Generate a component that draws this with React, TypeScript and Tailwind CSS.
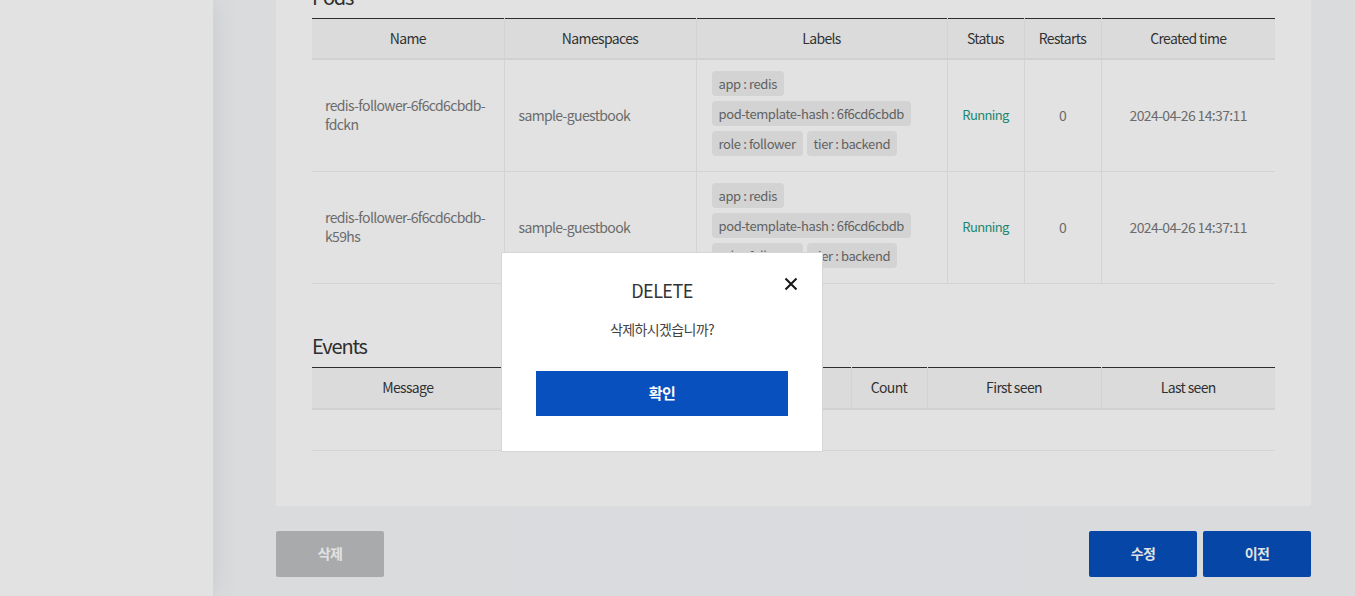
const FONT = { fontFamily: '"Noto Sans CJK KR", "Noto Sans", sans-serif' };

type Pod = {
  name: string;
  namespace: string;
  labels: string[];
  status: string;
  restarts: number;
  created: string;
};

const PODS: Pod[] = [
  {
    name: 'redis-follower-6f6cd6cbdb-fdckn',
    namespace: 'sample-guestbook',
    labels: ['app : redis', 'pod-template-hash : 6f6cd6cbdb', 'role : follower', 'tier : backend'],
    status: 'Running',
    restarts: 0,
    created: '2024-04-26 14:37:11',
  },
  {
    name: 'redis-follower-6f6cd6cbdb-k59hs',
    namespace: 'sample-guestbook',
    labels: ['app : redis', 'pod-template-hash : 6f6cd6cbdb', 'role : follower', 'tier : backend'],
    status: 'Running',
    restarts: 0,
    created: '2024-04-26 14:37:11',
  },
];

const POD_COLS = [
  { title: 'Name', w: 'w-[192px]' },
  { title: 'Namespaces', w: 'w-[192px]' },
  { title: 'Labels', w: 'w-[251px]' },
  { title: 'Status', w: 'w-[77px]' },
  { title: 'Restarts', w: 'w-[77px]' },
  { title: 'Created time', w: 'w-[174px]' },
];

const EVENT_COLS = [
  { title: 'Message', w: 'w-[192px]' },
  { title: 'Reason', w: 'w-[173px]' },
  { title: 'Source', w: 'w-[174px]' },
  { title: 'Count', w: 'w-[76px]' },
  { title: 'First seen', w: 'w-[174px]' },
  { title: 'Last seen', w: 'w-[174px]' },
];

function SectionTitle({ children }: { children: string }) {
  return (
    <h2 className="mb-[7px] h-[28px] text-[20px] leading-[28px] tracking-[-0.06em] text-[#333]">{children}</h2>
  );
}

function HeadRow({ cols, h }: { cols: { title: string; w: string }[]; h: string }) {
  return (
    <thead>
      <tr className="border-t border-[#333] border-b-2 border-b-[#ececec] bg-[#f8f8f8]">
        {cols.map((c, i) => (
          <th
            key={c.title}
            className={`${c.w} ${h} p-0 text-center text-[14px] font-normal text-[#383838] ${
              i > 0 ? 'border-l border-[#eeeeee]' : ''
            }`}
          >
            {c.title}
          </th>
        ))}
      </tr>
    </thead>
  );
}

export default function App() {
  return (
    <div className="relative flex h-[596px] w-[1355px] overflow-hidden tracking-[-0.04em]" style={FONT}>
      <aside className="z-10 w-[213px] shrink-0 bg-white shadow-[0_0_28px_rgba(0,0,0,0.08)]" />

      <main className="flex-1 bg-[#f6f7fa] pl-[63px] pr-[44px]">
        <div className="mt-[-47px] bg-white px-9 pt-[30px] pb-[55px]">
          <section>
            <SectionTitle>Pods</SectionTitle>
            <table className="w-full table-fixed border-collapse">
              <HeadRow cols={POD_COLS} h="h-[40px]" />
              <tbody>
                {PODS.map((pod) => (
                  <tr key={pod.name} className="border-b border-[#f0f0f0] text-[14px] text-[#7a7a7a]">
                    <td className="pl-[13px] pr-[6px] align-middle leading-[19px] break-words">{pod.name}</td>
                    <td className="border-l border-[#eeeeee] px-[14px] align-middle">{pod.namespace}</td>
                    <td className="border-l border-[#eeeeee] pt-[11px] pb-[15px] pl-[15px] pr-[10px]">
                      <div className="flex flex-wrap gap-x-[4px] gap-y-[5px]">
                        {pod.labels.map((l) => (
                          <span
                            key={l}
                            className="h-[25px] rounded-[4px] bg-[#efefef] px-[7px] text-[13px] leading-[25px] tracking-[-0.03em] whitespace-nowrap text-[#6e6e6e]"
                          >
                            {l}
                          </span>
                        ))}
                      </div>
                    </td>
                    <td className="border-l border-[#eeeeee] text-center text-[13px] text-[#1f9a80]">
                      {pod.status}
                    </td>
                    <td className="border-l border-[#eeeeee] text-center">{pod.restarts}</td>
                    <td className="border-l border-[#eeeeee] text-center">{pod.created}</td>
                  </tr>
                ))}
              </tbody>
            </table>
          </section>

          <section className="mt-[48px]">
            <SectionTitle>Events</SectionTitle>
            <table className="w-full table-fixed border-collapse">
              <HeadRow cols={EVENT_COLS} h="h-[42px]" />
              <tbody>
                <tr className="border-b border-[#f0f0f0]">
                  <td colSpan={6} className="h-[41px]" />
                </tr>
              </tbody>
            </table>
          </section>
        </div>

        <div className="mt-[25px] flex items-center justify-between">
          <button
            type="button"
            className="h-[46px] w-[108px] rounded-[2px] bg-[#bfc0c3] text-[14px] font-semibold text-white"
          >
            삭제
          </button>
          <div className="flex gap-[6px]">
            <button
              type="button"
              className="h-[46px] w-[108px] rounded-[2px] bg-[#0750bc] text-[14px] font-semibold text-white"
            >
              수정
            </button>
            <button
              type="button"
              className="h-[46px] w-[108px] rounded-[2px] bg-[#0750bc] text-[14px] font-semibold text-white"
            >
              이전
            </button>
          </div>
        </div>
      </main>

      <div className="absolute inset-0 z-20 bg-black/[0.113]" />

      <div className="absolute top-[252px] left-[501px] z-30 flex w-[322px] flex-col items-center border border-[#d6d6d6] bg-white px-[34px] pt-[23px] pb-[35px]">
        <button type="button" className="absolute top-[24px] left-[282px] text-[#1a1a1a]">
          <svg width="14" height="14" viewBox="0 0 14 14" fill="none" stroke="currentColor" strokeWidth="2.1">
            <path d="M1.5 1.5 L12.5 12.5 M12.5 1.5 L1.5 12.5" />
          </svg>
        </button>
        <h3 className="h-[28px] text-[18px] leading-[28px] tracking-[-0.03em] text-[#333]">DELETE</h3>
        <p className="mt-[15px] h-[20px] text-[14px] leading-[20px] text-[#444]">삭제하시겠습니까?</p>
        <button
          type="button"
          className="mt-[32px] h-[45px] w-full bg-[#0750be] text-[15px] font-bold text-white"
        >
          확인
        </button>
      </div>
    </div>
  );
}
